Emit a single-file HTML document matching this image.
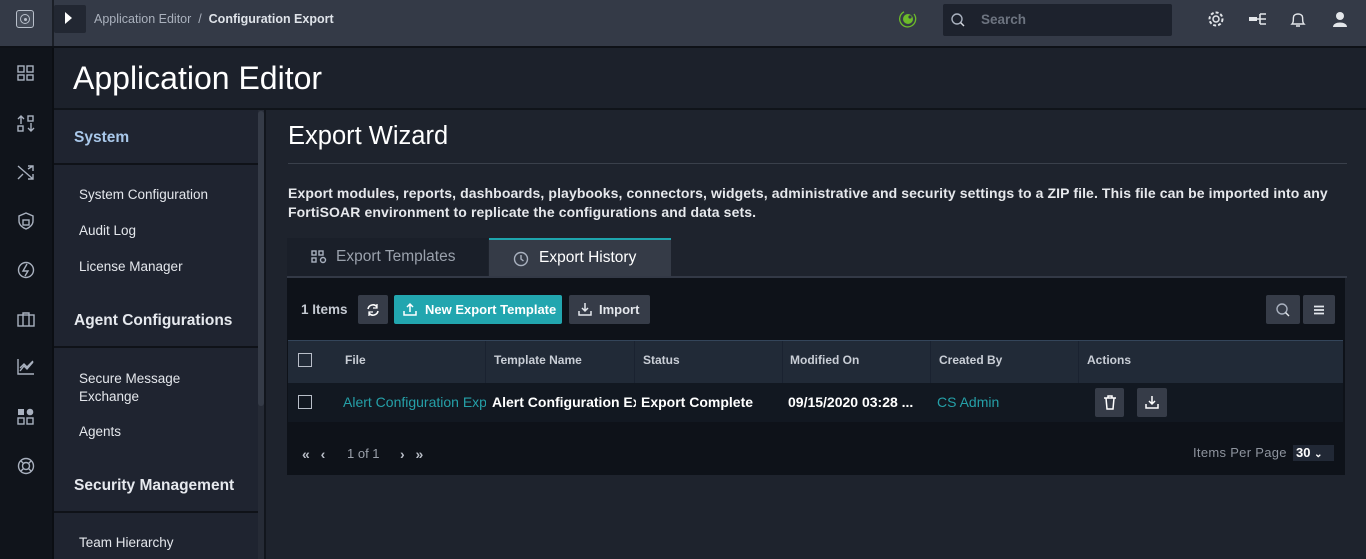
<!DOCTYPE html>
<html><head><meta charset="utf-8"><style>
*{box-sizing:border-box;margin:0;padding:0}
body{width:1366px;height:559px;overflow:hidden;background:#1e232d;font-family:"Liberation Sans",sans-serif;color:#e8eaee;position:relative}
.a{position:absolute}
.ic{stroke:#a9b1bf;fill:none;stroke-width:1.4}
.nav{color:#e4e7ec;font-size:13.5px;position:absolute;left:79px}
.sh{color:#e6e9ee;font-size:15.5px;font-weight:bold;position:absolute;left:74px}
.btn{position:absolute;top:295px;height:29px;background:#363c48;border-radius:2px;color:#e4e7ec;font-size:13px;font-weight:bold;line-height:29px}
.th{position:absolute;top:353px;font-size:12px;color:#c9ced6;font-weight:bold}
.td{position:absolute;top:394px;font-size:14px;font-weight:bold;color:#fff;white-space:nowrap;overflow:hidden}
.cb{position:absolute;width:14px;height:14px;border:1.5px solid #b8bec8;left:298px}
</style></head><body>
<div class="a" style="left:0;top:0;width:1366px;height:46px;background:#343a47"></div>
<div class="a" style="left:0;top:46px;width:1366px;height:2px;background:#0e1117"></div>
<div class="a" style="left:52px;top:0;width:2px;height:46px;background:#1b1f27"></div>
<div class="a" style="left:16px;top:10px;width:18px;height:18px;border:1.5px solid #b9c0cb;border-radius:3px;background:#454c59"></div>
<div class="a" style="left:20px;top:14px;width:10px;height:10px;border:1.5px solid #b9c0cb;border-radius:50%"></div>
<div class="a" style="left:23.5px;top:17.5px;width:3px;height:3px;background:#b9c0cb;border-radius:50%"></div>
<div class="a" style="left:54px;top:5px;width:32px;height:28px;background:#222732;border-radius:2px"></div>
<svg class="a" style="left:64px;top:11px" width="10" height="14"><path d="M1 1 L8 7 L1 13Z" fill="#fff"/></svg>
<div class="a" style="left:94px;top:12px;font-size:12.5px;color:#aab1bd">Application Editor&nbsp; /&nbsp; <b style="color:#dfe3e9">Configuration Export</b></div>
<svg class="a" style="left:898px;top:9px" width="20" height="20"><path d="M16 5 A8 8 0 1 1 6 2.8" fill="none" stroke="#6cbb2a" stroke-width="1.3"/><circle cx="10" cy="10" r="5" fill="#6cbb2a"/><circle cx="12" cy="8" r="1.6" fill="#343a47"/></svg>
<div class="a" style="left:943px;top:4px;width:229px;height:32px;background:#1d222d;border-radius:2px"></div>
<svg class="a" style="left:951px;top:13px" width="14" height="14"><circle cx="6" cy="6" r="5" class="ic" stroke="#d7dbe1"/><path d="M9.5 9.5 L13 13" stroke="#d7dbe1" stroke-width="1.4"/></svg>
<div class="a" style="left:981px;top:12px;font-size:13.5px;color:#6d7480;font-weight:bold">Search</div>
<svg class="a" style="left:1207px;top:10px" width="18" height="18"><circle cx="9" cy="9" r="3" fill="none" stroke="#e3e6ea" stroke-width="1.5"/><circle cx="9" cy="9" r="6.5" fill="none" stroke="#e3e6ea" stroke-width="2" stroke-dasharray="3 2"/></svg>
<svg class="a" style="left:1248px;top:12px" width="20" height="14"><rect x="1" y="5" width="8" height="4" fill="#e3e6ea"/><path d="M9 7 H12 M12 2 V12 M12 2 H18 M12 7 H18 M12 12 H18" stroke="#e3e6ea" stroke-width="1.6" fill="none"/></svg>
<svg class="a" style="left:1289px;top:10px" width="18" height="19"><path d="M3 14 C5 12 4 10 4.5 7 C5 3 13 3 13.5 7 C14 10 13 12 15 14 Z M7 16 H11" fill="none" stroke="#e3e6ea" stroke-width="1.4"/></svg>
<svg class="a" style="left:1332px;top:11px" width="16" height="17"><circle cx="8" cy="5" r="4" fill="#e3e6ea"/><path d="M1 16 C1 10 15 10 15 16Z" fill="#e3e6ea"/></svg>
<div class="a" style="left:0;top:48px;width:52px;height:511px;background:#10141b"></div>
<div class="a" style="left:52px;top:48px;width:2px;height:511px;background:#0b0e13"></div>
<svg class="a" style="left:17px;top:65px" width="18" height="18"><rect x="1" y="1" width="6" height="6" class="ic"/><rect x="10" y="1" width="6" height="6" class="ic"/><rect x="1" y="10" width="6" height="5" class="ic"/><rect x="10" y="10" width="6" height="5" class="ic"/></svg>
<svg class="a" style="left:17px;top:115px" width="18" height="18"><path d="M4 1 V9 M1 4 L4 1 L7 4 M14 8 V16 M11 13 L14 16 L17 13" class="ic"/><rect x="1" y="11" width="5" height="5" class="ic"/><rect x="11" y="1" width="5" height="5" class="ic"/></svg>
<svg class="a" style="left:17px;top:164px" width="18" height="18"><path d="M1 2 L16 15 M1 15 L6 10 M11 5 L16 2 M11 2 H16 V7 M16 10 V15 H11" class="ic"/></svg>
<svg class="a" style="left:17px;top:212px" width="18" height="18"><path d="M9 1 L16 4 V9 C16 13 12 16 9 17 C6 16 2 13 2 9 V4Z" class="ic"/><rect x="6" y="8" width="6" height="5" class="ic"/></svg>
<svg class="a" style="left:17px;top:261px" width="18" height="18"><circle cx="9" cy="9" r="7.5" class="ic"/><path d="M10 3 L6 10 H11 L8 15" class="ic"/></svg>
<svg class="a" style="left:17px;top:311px" width="18" height="18"><rect x="1" y="4" width="16" height="11" class="ic"/><path d="M6 4 V2 H12 V4 M6 4 V15 M12 4 V15" class="ic"/></svg>
<svg class="a" style="left:17px;top:358px" width="18" height="18"><path d="M1 1 V16 H17 M3 13 L7 8 L10 11 L16 4 M3 10 L7 6 L10 9 L16 3" class="ic"/></svg>
<svg class="a" style="left:17px;top:408px" width="18" height="18"><rect x="1" y="1" width="6" height="6" fill="#a9b1bf"/><circle cx="13" cy="4" r="3.3" fill="#a9b1bf"/><rect x="1" y="10" width="6" height="6" class="ic"/><rect x="10" y="10" width="6" height="6" class="ic"/></svg>
<svg class="a" style="left:17px;top:457px" width="18" height="18"><circle cx="9" cy="9" r="7.5" class="ic"/><circle cx="9" cy="9" r="3.5" class="ic"/><path d="M3.5 3.5 L6.5 6.5 M14.5 3.5 L11.5 6.5 M3.5 14.5 L6.5 11.5 M14.5 14.5 L11.5 11.5" class="ic"/></svg>
<div class="a" style="left:54px;top:48px;width:1312px;height:60px;background:#1c212b"></div>
<div class="a" style="left:73px;top:60px;font-size:32px;color:#fff">Application Editor</div>
<div class="a" style="left:54px;top:108px;width:1312px;height:2px;background:#10141a"></div>
<div class="a" style="left:54px;top:110px;width:204px;height:449px;background:#1f2430"></div>
<div class="a" style="left:258px;top:110px;width:6px;height:449px;background:#262b36"></div>
<div class="a" style="left:258px;top:111px;width:6px;height:295px;background:#353b47;border-radius:3px"></div>
<div class="a" style="left:264px;top:110px;width:2px;height:449px;background:#12161d"></div>
<div class="sh" style="top:129px;color:#a9c8ea">System</div>
<div class="a" style="left:54px;top:163px;width:204px;height:2px;background:#0f1218"></div>
<div class="nav" style="top:187px">System Configuration</div>
<div class="nav" style="top:223px">Audit Log</div>
<div class="nav" style="top:259px">License Manager</div>
<div class="sh" style="top:312px">Agent Configurations</div>
<div class="a" style="left:54px;top:346px;width:204px;height:2px;background:#0f1218"></div>
<div class="nav" style="top:370px;line-height:18px">Secure Message<br>Exchange</div>
<div class="nav" style="top:424px">Agents</div>
<div class="sh" style="top:477px">Security Management</div>
<div class="a" style="left:54px;top:511px;width:204px;height:2px;background:#0f1218"></div>
<div class="nav" style="top:535px">Team Hierarchy</div>
<div class="a" style="left:288px;top:122px;font-size:25.5px;color:#fff">Export Wizard</div>
<div class="a" style="left:288px;top:163px;width:1059px;height:1px;background:#3a404b"></div>
<div class="a" style="left:288px;top:184px;width:1062px;font-size:14px;letter-spacing:0.1px;font-weight:bold;color:#e6e8ec;line-height:19px">Export modules, reports, dashboards, playbooks, connectors, widgets, administrative and security settings to a ZIP file. This file can be imported into any FortiSOAR environment to replicate the configurations and data sets.</div>
<div class="a" style="left:287px;top:238px;width:201px;height:38px;background:#1a1f29"></div>
<svg class="a" style="left:311px;top:250px" width="16" height="14"><rect x="1" y="1" width="4" height="4" class="ic" stroke="#8a919d"/><rect x="1" y="8" width="4" height="4" class="ic" stroke="#8a919d"/><rect x="8" y="1" width="4" height="4" class="ic" stroke="#8a919d"/><circle cx="12" cy="10" r="2.5" class="ic" stroke="#8a919d"/></svg>
<div class="a" style="left:336px;top:248px;font-size:15.5px;color:#9aa1ac">Export Templates</div>
<div class="a" style="left:489px;top:238px;width:182px;height:38px;background:#353b47;border-top:2px solid #1ea5ad"></div>
<svg class="a" style="left:513px;top:251px" width="16" height="16"><circle cx="8" cy="8" r="6.5" class="ic" stroke="#fff" stroke-width="1.6"/><path d="M8 4 V8 L10.5 10" class="ic" stroke="#fff" stroke-width="1.6"/></svg>
<div class="a" style="left:539px;top:249px;font-size:15.5px;color:#fff">Export History</div>
<div class="a" style="left:287px;top:276px;width:1060px;height:2px;background:#333946"></div>
<div class="a" style="left:287px;top:278px;width:1058px;height:197px;background:#0e1219"></div>
<div class="a" style="left:301px;top:302px;font-size:13.5px;font-weight:bold;color:#c4c9d1">1 Items</div>
<div class="btn" style="left:358px;width:30px"></div>
<svg class="a" style="left:366px;top:303px" width="14" height="14"><path d="M2 6 A5 5 0 0 1 11 4 M12 8 A5 5 0 0 1 3 10" fill="none" stroke="#fff" stroke-width="1.6"/><path d="M11 1 V5 H7 M3 13 V9 H7" fill="none" stroke="#fff" stroke-width="1.3"/></svg>
<div class="btn" style="left:394px;width:168px;background:#22a6af;padding-left:31px;color:#fff">New Export Template</div>
<svg class="a" style="left:403px;top:302px" width="14" height="14"><path d="M7 10 V2 M4 5 L7 2 L10 5 M1 9 V13 H13 V9" fill="none" stroke="#fff" stroke-width="1.5"/></svg>
<div class="btn" style="left:569px;width:81px;padding-left:30px">Import</div>
<svg class="a" style="left:578px;top:302px" width="14" height="14"><path d="M7 1 V9 M4 6 L7 9 L10 6 M1 9 V13 H13 V9" fill="none" stroke="#e4e7ec" stroke-width="1.5"/></svg>
<div class="btn" style="left:1266px;width:34px"></div>
<svg class="a" style="left:1276px;top:303px" width="14" height="14"><circle cx="6" cy="6" r="5" class="ic" stroke="#e4e7ec"/><path d="M9.5 9.5 L13 13" stroke="#e4e7ec" stroke-width="1.4"/></svg>
<div class="btn" style="left:1303px;width:32px"></div>
<svg class="a" style="left:1313px;top:305px" width="12" height="10"><path d="M1 1.5 H11 M1 5 H11 M1 8.5 H11" stroke="#e4e7ec" stroke-width="1.7"/></svg>
<div class="a" style="left:288px;top:340px;width:1055px;height:43px;background:#212a37;border-top:1px solid #34455a"></div>
<div class="a" style="left:485px;top:341px;width:1px;height:42px;background:#1a2230"></div>
<div class="a" style="left:634px;top:341px;width:1px;height:42px;background:#1a2230"></div>
<div class="a" style="left:782px;top:341px;width:1px;height:42px;background:#1a2230"></div>
<div class="a" style="left:930px;top:341px;width:1px;height:42px;background:#1a2230"></div>
<div class="a" style="left:1078px;top:341px;width:1px;height:42px;background:#1a2230"></div>
<div class="cb" style="top:353px"></div>
<div class="th" style="left:345px">File</div>
<div class="th" style="left:494px">Template Name</div>
<div class="th" style="left:643px">Status</div>
<div class="th" style="left:790px">Modified On</div>
<div class="th" style="left:939px">Created By</div>
<div class="th" style="left:1087px">Actions</div>
<div class="a" style="left:288px;top:383px;width:1055px;height:39px;background:#121821"></div>
<div class="cb" style="top:395px"></div>
<div class="td" style="left:343px;width:143px;color:#25a0a8;font-weight:normal">Alert Configuration Export</div>
<div class="td" style="left:492px;width:144px">Alert Configuration Export</div>
<div class="td" style="left:641px">Export Complete</div>
<div class="td" style="left:788px">09/15/2020 03:28 ...</div>
<div class="td" style="left:937px;color:#25a0a8;font-weight:normal">CS Admin</div>
<div class="a" style="left:1095px;top:388px;width:29px;height:29px;background:#363c48;border-radius:2px"></div>
<svg class="a" style="left:1103px;top:395px" width="14" height="15"><path d="M1 3 H13 M5 3 V1 H9 V3 M3 3 L4 14 H10 L11 3" fill="none" stroke="#fff" stroke-width="1.5"/></svg>
<div class="a" style="left:1137px;top:388px;width:30px;height:29px;background:#363c48;border-radius:2px"></div>
<svg class="a" style="left:1145px;top:395px" width="14" height="14"><path d="M7 1 V9 M4 6 L7 9 L10 6 M1 9 V13 H13 V9" fill="none" stroke="#fff" stroke-width="1.5"/></svg>
<div class="a" style="left:302px;top:446px;font-size:14px;color:#b9bec7;font-weight:bold;letter-spacing:1px">«&nbsp;&nbsp;‹</div>
<div class="a" style="left:347px;top:446px;font-size:13px;color:#9aa0aa">1 of 1</div>
<div class="a" style="left:400px;top:446px;font-size:14px;color:#b9bec7;font-weight:bold;letter-spacing:1px">›&nbsp;&nbsp;»</div>
<div class="a" style="left:1193px;top:445px;font-size:13px;color:#8e949e;letter-spacing:0.3px">Items Per Page</div>
<div class="a" style="left:1293px;top:445px;width:41px;height:16px;background:#212835;font-size:13px;font-weight:bold;color:#fff;padding-left:3px;line-height:16px">30 <span style="font-size:10px">&#8964;</span></div>
</body></html>
